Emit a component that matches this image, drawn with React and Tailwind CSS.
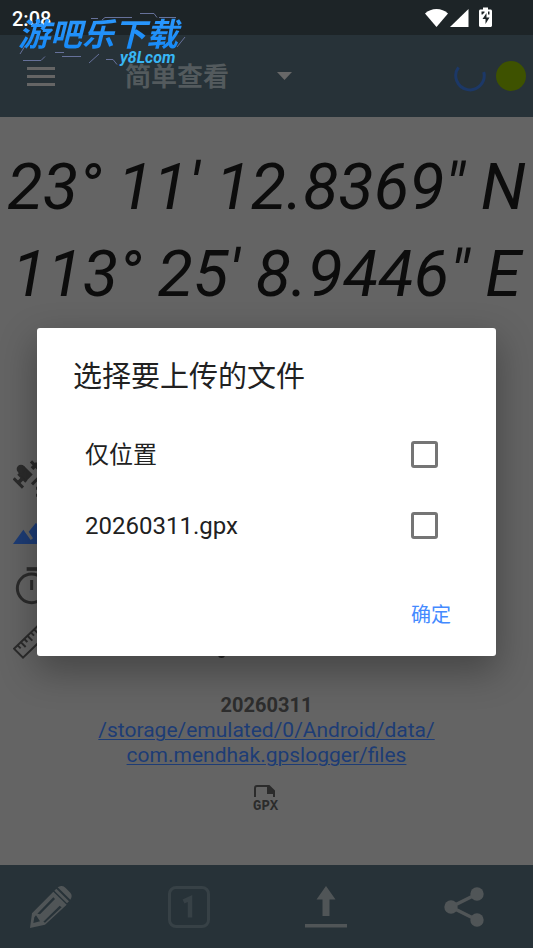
import { useState } from "react";

const FILES = [
    { id: "location", label: "仅位置" },
    { id: "gpx", label: "20260311.gpx" },
];

function StatusBar() {
    return (
        <div className="flex h-[35px] items-start justify-between bg-[#1d2427] pl-3 pr-[41px] text-white">
            <span className="pt-[7px] text-[20px] leading-6 font-medium">2:08</span>
            <div className="flex pt-[7px]">
                <svg width="23" height="20" viewBox="0 0 23 20" fill="currentColor" aria-hidden="true">
                    <path d="M0 6.500C6 .5 17 .5 23 6.500L11.500 20z" />
                </svg>
                <svg className="ml-0.5" width="19" height="20" viewBox="0 0 19 20" fill="currentColor" aria-hidden="true">
                    <path d="M18.500 2v18H0z" />
                </svg>
                <svg className="ml-2.5" width="13" height="20" viewBox="0 0 13 20" aria-hidden="true">
                    <path d="M1.500 2.500H4V.5h5v2h2.500c.8 0 1.500.7 1.500 1.500v14.500c0 .8-.7 1.500-1.500 1.500h-10C.7 20 0 19.300 0 18.500V4c0-.8.7-1.500 1.500-1.500z" fill="#fff" />
                    <path d="M7.500 6 3.500 12h3v5l4-6.500h-3zM2.500 4.500h3v1l-2 2h-1zM9 4.500h1.500v3H9z" fill="#1d2427" />
                </svg>
            </div>
        </div>
    );
}

function Watermark() {
    return (
        <div className="pointer-events-none absolute left-[18px] top-[10px] z-20 h-[56px] w-[170px]">
            <svg className="absolute inset-0" width="170" height="56" fill="none" stroke="#66719a" aria-hidden="true">
                <path d="M122 3.500h14l3 4M141 7.500h17M73 8.500h7M84 10l3-2.500h27M5 50.500h18l4-4M37 42.500h9M44 46.500h19M71 53l10-9M88 49.500h7l4 5M167 27l-8 10M2 44l5-8" />
            </svg>
            <div className="bg-linear-to-b from-[#2f9bff] to-[#0a84f5] bg-clip-text text-[32px] leading-[51px] font-bold italic whitespace-nowrap text-transparent">
                游吧乐下载
            </div>
            <div className="absolute left-[102px] top-[40px] text-[16px] leading-4 font-bold text-[#38b6f5] italic">
                y8Lcom
            </div>
        </div>
    );
}

function Header() {
    return (
        <header className="flex h-[82px] items-center bg-[#273238] pl-[27px] pr-[7px]">
            <button type="button" aria-label="菜单" className="flex w-7 flex-col gap-[5px]">
                <span className="h-[3px] bg-[#656565]" />
                <span className="h-[3px] bg-[#656565]" />
                <span className="h-[3px] bg-[#656565]" />
            </button>
            <div className="ml-[70px] flex items-center">
                <select
                    aria-label="视图"
                    className="w-[152px] appearance-none bg-transparent pt-0.5 text-[26px] leading-9 font-bold text-[#535a5d] outline-none"
                >
                    <option>简单查看</option>
                </select>
                <svg width="15" height="8" viewBox="0 0 15 8" fill="#686868" aria-hidden="true">
                    <path d="M0 0h15L7.500 8z" />
                </svg>
            </div>
            <svg className="ml-auto" width="32" height="32" viewBox="0 0 32 32" fill="none" aria-hidden="true">
                <path d="M4.500 7.300A14.200 14.200 0 1 0 29.700 12" stroke="#1c3867" strokeWidth="3" />
            </svg>
            <span className="ml-[10px] size-[30px] rounded-full bg-[#3e5200]" />
        </header>
    );
}

function SatelliteIcon() {
    return (
        <svg width="38" height="54" viewBox="39 39 114 162" fill="none" stroke="#2b2b2b" aria-hidden="true">
            <path d="M41 115l28 28M55 101l24 24M93 64l30 30" strokeWidth="9" />
            <path d="M54 129l16-16M96 86l16-16" strokeWidth="11" />
            <path d="M63 87l26 26" strokeWidth="26" />
            <circle cx="63" cy="87" r="13" fill="#2b2b2b" stroke="none" />
            <path d="M96 133l22-22M108 145h8M108 166h8" strokeWidth="9" />
        </svg>
    );
}

function MountainIcon() {
    return (
        <svg width="38" height="54" viewBox="39 201 114 162" fill="#1d3c75" aria-hidden="true">
            <path d="M39 312l31-43 22 31 7-5-13-20 22-27 45 64z" />
        </svg>
    );
}

function TimerIcon() {
    return (
        <svg width="38" height="54" viewBox="39 363 114 162" fill="none" stroke="#2b2b2b" aria-hidden="true">
            <path d="M80 387h31" strokeWidth="11" />
            <circle cx="95" cy="445" r="43" strokeWidth="9" />
            <path d="M95 420v30" strokeWidth="9" />
        </svg>
    );
}

function RulerIcon() {
    return (
        <svg width="38" height="54" viewBox="39 525 114 162" fill="none" stroke="#2b2b2b" strokeWidth="6" aria-hidden="true">
            <path d="M42 626l76-73 27 27-76 73z" />
            <path d="M53 616l9 9M63 607l14 14M73 597l9 9M83 588l14 14M93 578l9 9M103 569l14 14" />
        </svg>
    );
}

function GpxIcon() {
    return (
        <svg width="28" height="30" viewBox="0 0 28 30" fill="none" aria-hidden="true">
            <path d="M3 13V4q0-2 2-2h12l5 5v6" stroke="#2b2b2b" strokeWidth="2" />
            <path d="M15 2h2l6 6v2h-8z" fill="#2b2b2b" />
            <text x="1" y="26" fill="#2b2b2b" className="font-['Liberation_Mono'] text-[14px] font-bold">GPX</text>
        </svg>
    );
}

function Details() {
    return (
        <main className="flex flex-1 flex-col pt-[27px] text-[#2d2d2d]">
            <div className="text-center text-[65px] leading-[87px] whitespace-nowrap text-[#0c0c0c] italic">
                <div>23° 11' 12.8369" N</div>
                <div>113° 25' 8.9446" E</div>
            </div>
            <div className="mt-[135px] flex flex-col px-[13px]">
                <SatelliteIcon />
                <MountainIcon />
                <TimerIcon />
                <div className="flex items-center">
                    <RulerIcon />
                    <span className="ml-[167px] mt-6 size-[7px] rounded-full bg-[#222]" />
                </div>
            </div>
            <div className="mt-6 text-center text-[21px] leading-[25px]">
                <div className="text-[20px] font-bold">20260311</div>
                <a href="#files" className="text-[#1d3c75] underline decoration-1 underline-offset-2">
                    /storage/emulated/0/Android/data/
                    <br />
                    com.mendhak.gpslogger/files
                </a>
            </div>
            <div className="mt-4 flex justify-center pr-0.5">
                <GpxIcon />
            </div>
        </main>
    );
}

function Footer() {
    return (
        <footer className="flex h-[83px] items-center justify-between bg-[#273238] pl-[30px] pr-[48px] text-[#505557]">
            <button type="button" aria-label="注释">
                <svg width="42" height="42" viewBox="92 90 126 126" fill="currentColor">
                    <path
                        fillRule="evenodd"
                        d="M92 216l6-44 64-65 40 39-65 60zM102 201l20-5-12-18-5 6zM114 173l48-49 5 5-45 46zM132 197l49-48 6 5-50 46z"
                    />
                    <path d="M165 104l6-6 38 38-6 6zM175 94q13-9 24 2l14 14q8 9 0 21z" />
                </svg>
            </button>
            <button
                type="button"
                aria-label="记录一个点"
                className="flex size-[42px] items-center justify-center rounded-lg border-[3px] border-[#374146]"
            >
                <svg className="shrink-0" width="42" height="42" viewBox="0 0 42 42" fill="none" aria-hidden="true">
                    <path d="M15.500 15.500l6.500-3v19" stroke="#374146" strokeWidth="4.500" />
                </svg>
            </button>
            <button type="button" aria-label="上传">
                <svg width="42" height="42" viewBox="0 0 42 42" fill="currentColor">
                    <path d="M21 0l9.500 13.500H24.500V30h-7V13.500h-6zM0 38h42v3.500H0z" />
                </svg>
            </button>
            <button type="button" aria-label="分享">
                <svg width="42" height="42" viewBox="0 0 42 42" fill="currentColor">
                    <path d="M34 8L8 21l26 13" fill="none" stroke="currentColor" strokeWidth="3.500" />
                    <circle cx="34" cy="8" r="6.700" />
                    <circle cx="8" cy="21" r="6.700" />
                    <circle cx="34" cy="34" r="6.700" />
                </svg>
            </button>
        </footer>
    );
}

function UploadDialog() {
    const [checked, setChecked] = useState({});

    const toggle = (id) => setChecked({ ...checked, [id]: !checked[id] });

    return (
        <div className="absolute inset-0 z-10 flex items-center px-[37px] pt-9">
            <div
                role="dialog"
                aria-labelledby="upload-title"
                className="w-full rounded-[3px] bg-white pt-[26px] pb-[23px] text-[#212121] shadow-[0_14px_36px_2px_rgba(0,0,0,0.3)]"
            >
                <h2 id="upload-title" className="px-9 text-[29px] leading-[46px]">
                    选择要上传的文件
                </h2>
                <div className="mt-[19px]">
                    {FILES.map((file) => (
                        <label key={file.id} className="flex h-[71px] items-center justify-between pl-12 pr-[58px] text-[24px]">
                            {file.label}
                            <input
                                type="checkbox"
                                checked={!!checked[file.id]}
                                onChange={() => toggle(file.id)}
                                className="size-[27px] appearance-none rounded-[3px] border-[3px] border-[#757575] checked:bg-[#448aff]"
                            />
                        </label>
                    ))}
                </div>
                <div className="mt-9 flex justify-end pr-[45px]">
                    <button type="button" className="text-[20px] leading-9 text-[#448aff]">
                        确定
                    </button>
                </div>
            </div>
        </div>
    );
}

export default function App() {
    return (
        <div className="relative flex min-h-screen flex-col overflow-hidden bg-[#646464] font-['Roboto','Noto_Sans_CJK_SC',sans-serif]">
            <StatusBar />
            <Header />
            <Details />
            <Footer />
            <UploadDialog />
            <Watermark />
        </div>
    );
}
